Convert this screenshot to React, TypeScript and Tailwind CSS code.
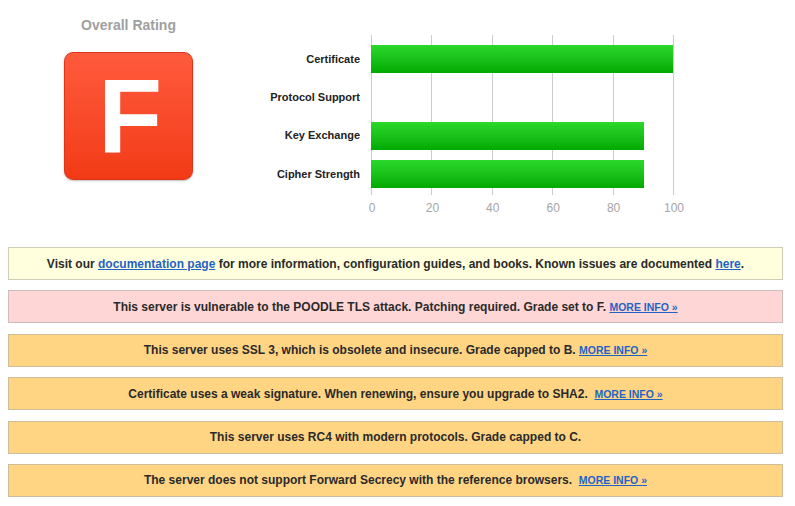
import React from "react";

const rows = [
  { label: "Certificate", value: 100 },
  { label: "Protocol Support", value: 0 },
  { label: "Key Exchange", value: 90 },
  { label: "Cipher Strength", value: 90 },
];

const ticks = [0, 20, 40, 60, 80, 100];

type Notice = {
  tone: "info" | "error" | "warning";
  content: React.ReactNode;
};

const MoreInfo = () => (
  <a href="#" className="text-[10.5px] font-bold text-[#1f63c6] underline">
    MORE INFO »
  </a>
);

const notices: Notice[] = [
  {
    tone: "info",
    content: (
      <>
        Visit our{" "}
        <a href="#" className="text-[#1f63c6] underline">
          documentation page
        </a>{" "}
        for more information, configuration guides, and books. Known issues are documented{" "}
        <a href="#" className="text-[#1f63c6] underline">
          here
        </a>
        .
      </>
    ),
  },
  {
    tone: "error",
    content: (
      <>
        This server is vulnerable to the POODLE TLS attack. Patching required. Grade set to F. <MoreInfo />
      </>
    ),
  },
  {
    tone: "warning",
    content: (
      <>
        This server uses SSL 3, which is obsolete and insecure. Grade capped to B. <MoreInfo />
      </>
    ),
  },
  {
    tone: "warning",
    content: (
      <>
        Certificate uses a weak signature. When renewing, ensure you upgrade to SHA2.{"\u00a0 "}
        <MoreInfo />
      </>
    ),
  },
  {
    tone: "warning",
    content: <>This server uses RC4 with modern protocols. Grade capped to C.</>,
  },
  {
    tone: "warning",
    content: (
      <>
        The server does not support Forward Secrecy with the reference browsers.{"\u00a0 "}
        <MoreInfo />
      </>
    ),
  },
];

const toneClass = {
  info: "bg-[#ffffdd] border-[#cfcdb8]",
  error: "bg-[#ffd6d6] border-[#cdbcbc]",
  warning: "bg-[#ffd584] border-[#cdbd9a]",
};

export default function App() {
  return (
    <div className="w-[795px] h-[506px] bg-white overflow-hidden font-['Liberation_Sans',Arial,sans-serif]">
      {/* summary */}
      <div className="flex h-[240px]">
        <div className="w-[257px] flex flex-col items-center">
          <div className="mt-[17px] text-[14px] leading-[17px] font-bold text-[#a0a0a0]">Overall Rating</div>
          <div className="mt-[18px] w-[129px] h-[128px] rounded-[9px] border border-[#d9361a] bg-gradient-to-b from-[#ff5a3c] to-[#f23a14] shadow-[0_1px_2px_rgba(0,0,0,0.25)] flex items-center justify-center">
            <span className="pl-[3px] text-[105px] leading-none font-bold text-white">F</span>
          </div>
        </div>

        {/* chart */}
        <div className="pt-[35px] pl-[3px]">
          <div className="flex">
            <div className="w-[100px] pt-[5px] flex flex-col">
              {rows.map((r) => (
                <div
                  key={r.label}
                  className="h-[38.3px] flex items-center justify-end text-[11px] font-bold text-[#222]"
                >
                  {r.label}
                </div>
              ))}
            </div>
            <div className="ml-[11px] relative w-[302px] h-[160px]">
              {ticks.map((t) => (
                <div
                  key={t}
                  className="absolute top-0 bottom-0 w-px bg-[#cccccc]"
                  style={{ left: `${(t / 100) * 302}px` }}
                />
              ))}
              <div className="relative pt-[5px] flex flex-col">
                {rows.map((r) => (
                  <div key={r.label} className="h-[38.3px] flex items-center">
                    {r.value > 0 && (
                      <div
                        className="h-[28px] bg-gradient-to-b from-[#2bd82b] to-[#00aa00]"
                        style={{ width: `${(r.value / 100) * 302 + 1}px` }}
                      />
                    )}
                  </div>
                ))}
              </div>
              <div className="absolute top-[164px] left-0 w-full">
                {ticks.map((t) => (
                  <span
                    key={t}
                    className="absolute -translate-x-1/2 text-[12px] text-[#a5a5a5]"
                    style={{ left: `${(t / 100) * 302 + 1}px` }}
                  >
                    {t}
                  </span>
                ))}
              </div>
            </div>
          </div>
        </div>
      </div>

      {/* notices */}
      <div className="mt-[7px] px-[8px] w-[791px] flex flex-col gap-[10.4px]">
        {notices.map((n, i) => (
          <div
            key={i}
            className={`h-[33px] border flex items-center justify-center text-[12px] font-bold text-[#2a2a2a] ${toneClass[n.tone]}`}
          >
            <span>{n.content}</span>
          </div>
        ))}
      </div>
    </div>
  );
}
